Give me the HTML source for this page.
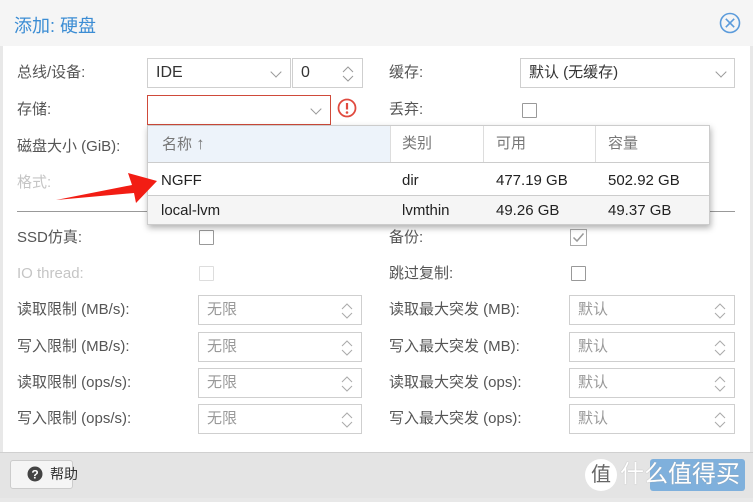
<!DOCTYPE html>
<html><head><meta charset="utf-8"><style>
*{box-sizing:border-box;margin:0;padding:0}
body{width:753px;height:502px;overflow:hidden;background:#e8e8e8;font-family:"Liberation Sans","Noto Sans CJK SC",sans-serif;font-size:15px;color:#555;position:relative}
.a{position:absolute}
.hdr{left:0;top:0;width:753px;height:46px;background:#f5f5f5}
.body{left:3px;top:46px;width:747px;height:406px;background:#fff}
.foot{left:0;top:452px;width:753px;height:46px;background:#e4e4e4;border-top:1px solid #d0d0d0}
.lbl{white-space:nowrap;line-height:18px}
.box{border:1px solid #cfcfcf;background:#fff;height:30px;line-height:28px;padding-left:8px;color:#333}
.dis{color:#aaa}
.cb{width:15px;height:15px;border:1px solid #999;border-radius:1px;background:#fff}
.chev{position:absolute;right:9px;top:9px;width:8px;height:8px;border-right:1px solid #999;border-bottom:1px solid #999;transform:rotate(45deg)}
.spin{position:absolute;right:8px;top:5px;width:12px;height:20px}
</style></head><body>
<div class="a hdr"></div>
<div class="a" style="left:14px;top:12px;font-size:18px;color:#3c8dd4">添加: 硬盘</div>
<svg class="a" style="left:719px;top:12px" width="22" height="22" viewBox="0 0 22 22"><circle cx="11" cy="11" r="9.5" fill="none" stroke="#5b9bdb" stroke-width="1.6"/><path d="M6.8 6.8L15.2 15.2M15.2 6.8L6.8 15.2" stroke="#5b9bdb" stroke-width="1.6"/></svg>
<div class="a body"></div>

<div class="a lbl" style="left:17px;top:64px">总线/设备:</div>
<div class="a box" style="left:147px;top:58px;width:144px;font-size:16px">IDE<span class="chev" style="right:10px"></span></div>
<div class="a box" style="left:292px;top:58px;width:71px;font-size:16px">0<svg class="spin" viewBox="0 0 12 20"><path d="M1 8L6 3L11 8M1 12L6 17L11 12" fill="none" stroke="#999"/></svg></div>
<div class="a lbl" style="left:389px;top:64px">缓存:</div>
<div class="a box" style="left:520px;top:58px;width:215px;font-size:15px">默认 (无缓存)<span class="chev"></span></div>

<div class="a lbl" style="left:17px;top:101px">存储:</div>
<div class="a box" style="left:147px;top:95px;width:184px;border-color:#cf4a3a"><span class="chev" style="right:10px"></span></div>
<svg class="a" style="left:337px;top:98px" width="20" height="20" viewBox="0 0 20 20"><circle cx="10" cy="10" r="8.5" fill="none" stroke="#e04a3f" stroke-width="1.8"/><path d="M10 5V11.5" stroke="#e04a3f" stroke-width="2.2"/><circle cx="10" cy="14.5" r="1.3" fill="#e04a3f"/></svg>
<div class="a lbl" style="left:389px;top:101px">丢弃:</div>
<div class="a cb" style="left:522px;top:103px"></div>

<div class="a lbl" style="left:17px;top:138px">磁盘大小 (GiB):</div>
<div class="a lbl dis" style="left:17px;top:174px;color:#c5c5c5">格式:</div>
<div class="a" style="left:17px;top:211px;width:338px;height:1px;background:#999"></div>
<div class="a" style="left:389px;top:211px;width:346px;height:1px;background:#999"></div>

<div class="a lbl" style="left:17px;top:229px">SSD仿真:</div>
<div class="a cb" style="left:199px;top:230px"></div>
<div class="a lbl" style="left:389px;top:229px">备份:</div>
<svg class="a" style="left:570px;top:229px" width="17" height="17" viewBox="0 0 17 17"><rect x="0.5" y="0.5" width="16" height="16" fill="#fff" stroke="#aaa"/><path d="M3.5 8.5L7 12L13.5 4.5" fill="none" stroke="#999" stroke-width="1.5"/></svg>
<div class="a lbl" style="left:17px;top:265px;color:#c5c5c5">IO thread:</div>
<div class="a cb" style="left:199px;top:266px;border-color:#ddd"></div>
<div class="a lbl" style="left:389px;top:265px">跳过复制:</div>
<div class="a cb" style="left:571px;top:266px"></div>

<div class="a lbl" style="left:17px;top:301px">读取限制 (MB/s):</div>
<div class="a lbl" style="left:17px;top:338px">写入限制 (MB/s):</div>
<div class="a lbl" style="left:17px;top:374px">读取限制 (ops/s):</div>
<div class="a lbl" style="left:17px;top:410px">写入限制 (ops/s):</div>
<div class="a lbl" style="left:389px;top:301px">读取最大突发 (MB):</div>
<div class="a lbl" style="left:389px;top:338px">写入最大突发 (MB):</div>
<div class="a lbl" style="left:389px;top:374px">读取最大突发 (ops):</div>
<div class="a lbl" style="left:389px;top:410px">写入最大突发 (ops):</div>

<div class="a box dis" style="left:198px;top:295px;width:164px;color:#999">无限<svg class="spin" viewBox="0 0 12 20"><path d="M1 8L6 3L11 8M1 12L6 17L11 12" fill="none" stroke="#aaa"/></svg></div>
<div class="a box dis" style="left:198px;top:332px;width:164px;color:#999">无限<svg class="spin" viewBox="0 0 12 20"><path d="M1 8L6 3L11 8M1 12L6 17L11 12" fill="none" stroke="#aaa"/></svg></div>
<div class="a box dis" style="left:198px;top:368px;width:164px;color:#999">无限<svg class="spin" viewBox="0 0 12 20"><path d="M1 8L6 3L11 8M1 12L6 17L11 12" fill="none" stroke="#aaa"/></svg></div>
<div class="a box dis" style="left:198px;top:404px;width:164px;color:#999">无限<svg class="spin" viewBox="0 0 12 20"><path d="M1 8L6 3L11 8M1 12L6 17L11 12" fill="none" stroke="#aaa"/></svg></div>
<div class="a box dis" style="left:569px;top:295px;width:166px;color:#999">默认<svg class="spin" viewBox="0 0 12 20"><path d="M1 8L6 3L11 8M1 12L6 17L11 12" fill="none" stroke="#aaa"/></svg></div>
<div class="a box dis" style="left:569px;top:332px;width:166px;color:#999">默认<svg class="spin" viewBox="0 0 12 20"><path d="M1 8L6 3L11 8M1 12L6 17L11 12" fill="none" stroke="#aaa"/></svg></div>
<div class="a box dis" style="left:569px;top:368px;width:166px;color:#999">默认<svg class="spin" viewBox="0 0 12 20"><path d="M1 8L6 3L11 8M1 12L6 17L11 12" fill="none" stroke="#aaa"/></svg></div>
<div class="a box dis" style="left:569px;top:404px;width:166px;color:#999">默认<svg class="spin" viewBox="0 0 12 20"><path d="M1 8L6 3L11 8M1 12L6 17L11 12" fill="none" stroke="#aaa"/></svg></div>

<!-- dropdown -->
<div class="a" style="left:147px;top:125px;width:563px;height:100px;background:#fff;border:1px solid #ccc;box-shadow:1px 3px 6px rgba(0,0,0,.3)"></div>
<div class="a" style="left:148px;top:126px;width:242px;height:36px;background:#edf3fa"></div>
<div class="a" style="left:390px;top:126px;width:319px;height:36px;background:#fff"></div>
<div class="a" style="left:148px;top:162px;width:561px;height:1px;background:#ccc"></div>
<div class="a" style="left:148px;top:195px;width:561px;height:1px;background:#ccc"></div>
<div class="a" style="left:148px;top:196px;width:561px;height:28px;background:#f5f5f5"></div>
<div class="a" style="left:390px;top:126px;width:1px;height:36px;background:#ddd"></div>
<div class="a" style="left:483px;top:126px;width:1px;height:36px;background:#ddd"></div>
<div class="a" style="left:595px;top:126px;width:1px;height:36px;background:#ddd"></div>
<div class="a lbl" style="left:162px;top:135px;color:#777">名称 <span style="font-size:17px">↑</span></div>
<div class="a lbl" style="left:402px;top:135px;color:#777">类别</div>
<div class="a lbl" style="left:496px;top:135px;color:#777">可用</div>
<div class="a lbl" style="left:608px;top:135px;color:#777">容量</div>
<div class="a lbl" style="left:161px;top:172px;color:#222">NGFF</div>
<div class="a lbl" style="left:402px;top:172px;color:#222">dir</div>
<div class="a lbl" style="left:496px;top:172px;color:#222">477.19 GB</div>
<div class="a lbl" style="left:608px;top:172px;color:#222">502.92 GB</div>
<div class="a lbl" style="left:161px;top:202px;color:#222">local-lvm</div>
<div class="a lbl" style="left:402px;top:202px;color:#222">lvmthin</div>
<div class="a lbl" style="left:496px;top:202px;color:#222">49.26 GB</div>
<div class="a lbl" style="left:608px;top:202px;color:#222">49.37 GB</div>

<svg class="a" style="left:0;top:0" width="200" height="230"><polygon points="56,200 132,185 128,173 157,181 136,203 134,193" fill="#f21d14"/></svg>

<div class="a foot"></div>
<div class="a" style="left:10px;top:460px;width:63px;height:29px;background:#f5f5f5;border:1px solid #ccc;border-radius:3px"></div>
<svg class="a" style="left:27px;top:466px" width="16" height="16" viewBox="0 0 16 16"><circle cx="8" cy="8" r="7.5" fill="#444"/><text x="8" y="12.5" font-size="12" font-weight="bold" fill="#fff" text-anchor="middle" font-family="Liberation Sans">?</text></svg>
<div class="a lbl" style="left:50px;top:465px;color:#333;font-size:14px">帮助</div>
<div class="a" style="left:585px;top:459px;width:32px;height:32px;border-radius:50%;background:#fff;color:#666;font-size:20px;text-align:center;line-height:32px">值</div>
<div class="a" style="left:650px;top:459px;width:95px;height:32px;background:#7fb0dc;border-radius:3px"></div>
<div class="a" style="left:620px;top:460px;font-size:24px;color:#fff;white-space:nowrap;line-height:30px;text-shadow:0 0 1px #999">什么值得买</div>
</body></html>
